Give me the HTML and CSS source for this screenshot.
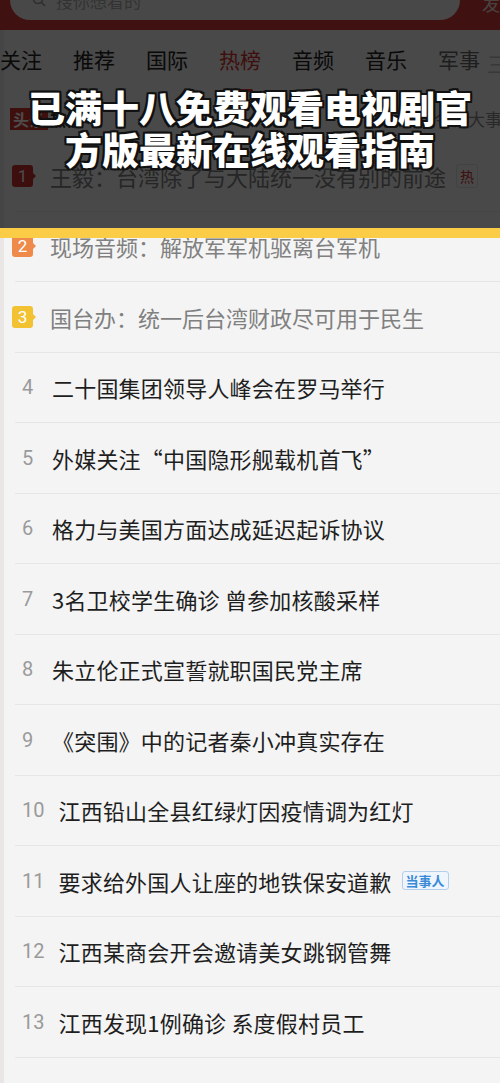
FILE: index.html
```html
<!DOCTYPE html>
<html lang="zh-CN">
<head>
    <meta charset="UTF-8">
    <meta name="viewport" content="width=device-width, initial-scale=1.0">
    <title>热榜</title>
    <link rel="stylesheet" href="styles.css">
</head>
<body>

    <div class="screen">
        <!-- Search header -->
        <div class="search-bar">
            <div class="search-box">
                <svg class="search-icon" width="14" height="14" viewBox="0 0 14 14"><circle cx="6" cy="6" r="4.5" fill="none" stroke="#999" stroke-width="1.6"/><line x1="9.4" y1="9.4" x2="13" y2="13" stroke="#999" stroke-width="1.6"/></svg>
                <span class="placeholder">搜你想看的</span>
            </div>
            <span class="publish">发</span>
        </div>

        <!-- Channel tabs -->
        <div class="tabs">
            <span class="tab">关注</span>
            <span class="tab">推荐</span>
            <span class="tab">国际</span>
            <span class="tab active">热榜</span>
            <span class="tab">音频</span>
            <span class="tab">音乐</span>
            <span class="tab fade">军事</span>
            <span class="tab-menu">三</span>
        </div>

        <!-- Hot list header -->
        <div class="hot-head">
            <span class="hot-logo">头条</span><span class="hot-logo-text">热榜</span>
            <span class="hot-more">今日大事</span>
        </div>

        <!-- Hot list -->
        <ul class="hot-list">
            <li class="row">
                <span class="badge"><svg width="24" height="22" viewBox="0 0 24 22"><path d="M3 0h15a3 3 0 0 1 3 3v5l3 3-3 3v5a3 3 0 0 1-3 3H3a3 3 0 0 1-3-3V3a3 3 0 0 1 3-3z" fill="#c8302c"/></svg><b>1</b></span>
                <span class="title muted">王毅：台湾除了与大陆统一没有别的前途</span>
                <span class="tag tag-hot">热</span>
            </li>
            <li class="row">
                <span class="badge"><svg width="24" height="22" viewBox="0 0 24 22"><path d="M3 0h15a3 3 0 0 1 3 3v5l3 3-3 3v5a3 3 0 0 1-3 3H3a3 3 0 0 1-3-3V3a3 3 0 0 1 3-3z" fill="#ee8a4a"/></svg><b>2</b></span>
                <span class="title muted">现场音频：解放军军机驱离台军机</span>
            </li>
            <li class="row">
                <span class="badge"><svg width="24" height="22" viewBox="0 0 24 22"><path d="M3 0h15a3 3 0 0 1 3 3v5l3 3-3 3v5a3 3 0 0 1-3 3H3a3 3 0 0 1-3-3V3a3 3 0 0 1 3-3z" fill="#f2c233"/></svg><b>3</b></span>
                <span class="title muted">国台办：统一后台湾财政尽可用于民生</span>
            </li>
            <li class="row"><span class="num">4</span><span class="title">二十国集团领导人峰会在罗马举行</span></li>
            <li class="row"><span class="num">5</span><span class="title">外媒关注“中国隐形舰载机首飞”</span></li>
            <li class="row"><span class="num">6</span><span class="title">格力与美国方面达成延迟起诉协议</span></li>
            <li class="row"><span class="num">7</span><span class="title">3名卫校学生确诊 曾参加核酸采样</span></li>
            <li class="row"><span class="num">8</span><span class="title">朱立伦正式宣誓就职国民党主席</span></li>
            <li class="row"><span class="num">9</span><span class="title">《突围》中的记者秦小冲真实存在</span></li>
            <li class="row"><span class="num">10</span><span class="title">江西铅山全县红绿灯因疫情调为红灯</span></li>
            <li class="row">
                <span class="num">11</span><span class="title">要求给外国人让座的地铁保安道歉</span>
                <span class="tag tag-blue">当事人</span>
            </li>
            <li class="row"><span class="num">12</span><span class="title">江西某商会开会邀请美女跳钢管舞</span></li>
            <li class="row"><span class="num">13</span><span class="title">江西发现1例确诊 系度假村员工</span></li>
        </ul>

        <!-- Cover overlay with headline -->
        <div class="cover">
            <h1 class="cover-title">已满十八免费观看电视剧官<br>方版最新在线观看指南</h1>
        </div>
        <div class="cover-bar"></div>
    </div>

</body>
</html>
```

FILE: styles.css
```css
/* Page */
body {
    margin: 0;
    padding: 0;
    background: #f4f4f4;
    font-family: "Noto Sans CJK SC", "Noto Sans", sans-serif;
    overflow: hidden;
}

.screen {
    position: relative;
    width: 500px;
    height: 1083px;
    overflow: hidden;
    background: linear-gradient(90deg, #ebe6e6 0, #ebe6e6 4px, #f4f4f4 4px);
}

/* Search header */
.search-bar {
    height: 30px;
    background: #d23a37;
    display: flex;
    align-items: flex-start;
    padding: 0 0 0 10px;
    box-sizing: border-box;
}

.search-box {
    width: 450px;
    height: 40px;
    margin-top: -20px;
    background: #f2f2f2;
    border-radius: 20px;
    display: flex;
    align-items: center;
    padding-left: 22px;
    box-sizing: border-box;
    gap: 10px;
}

.placeholder {
    color: #aaa;
    font-size: 17px;
}

.publish {
    color: #f7dede;
    font-size: 18px;
    margin-left: 22px;
    line-height: 1;
    margin-top: -6px;
}

/* Tabs */
.tabs {
    position: relative;
    height: 58px;
    display: flex;
    align-items: center;
    gap: 31px;
    white-space: nowrap;
}

.tab {
    font-size: 21px;
    color: #222;
    position: relative;
    line-height: 1;
}

.tab.active {
    color: #d2332f;
}

.tab.active::after {
    content: "";
    position: absolute;
    left: 8px;
    right: 8px;
    bottom: -22px;
    height: 3px;
    border-radius: 2px;
    background: #d2332f;
}

.tab.fade {
    color: #666;
}

.tab-menu {
    position: absolute;
    right: -8px;
    top: 18px;
    font-size: 21px;
    color: #bbb;
}

/* Hot list header */
.hot-head {
    height: 53px;
    display: flex;
    align-items: center;
    padding-left: 10px;
    padding-top: 8px;
    box-sizing: border-box;
}

.hot-logo {
    background: #d2332f;
    color: #fff;
    font-size: 16px;
    font-weight: bold;
    padding: 0 3px;
    line-height: 22px;
}

.hot-logo-text {
    font-size: 16px;
    font-weight: bold;
    color: #222;
    margin-left: 2px;
}

.hot-more {
    margin-left: auto;
    font-size: 17px;
    color: #888;
    white-space: nowrap;
    margin-right: -2px;
}

/* Hot list rows */
.hot-list {
    list-style: none;
    margin: 0;
    padding: 0;
}

.row {
    height: 70.5px;
    display: flex;
    align-items: center;
    margin-left: 15px;
    padding-left: 7px;
    border-bottom: 1px solid #e6e6e6;
    box-sizing: border-box;
    white-space: nowrap;
}

.num {
    font-family: "Roboto", "Liberation Sans", sans-serif;
    font-size: 20px;
    color: #9a9a9a;
    min-width: 16px;
    margin-right: 14px;
}

.badge {
    position: relative;
    width: 24px;
    height: 22px;
    margin-left: -10px;
    margin-right: 14px;
}

.badge svg {
    display: block;
}

.badge b {
    position: absolute;
    left: 0;
    top: 0;
    width: 21px;
    text-align: center;
    line-height: 22px;
    font-family: "Roboto", "Liberation Sans", sans-serif;
    font-weight: normal;
    font-size: 17px;
    color: #fff;
}

.title {
    font-size: 22px;
    color: #1e1e1e;
    letter-spacing: 0.2px;
}

.title.muted {
    color: #808080;
    letter-spacing: 0;
}

.tag {
    margin-left: 10px;
    font-size: 13px;
    line-height: 17px;
    padding: 0 3px;
    border-radius: 3px;
}

.tag-hot {
    color: #c33;
    border: 1px solid #ddd;
    line-height: 22px;
    font-size: 14px;
    padding: 0 3px;
}

.tag-blue {
    color: #3a8ad6;
    background: #eef5fc;
    border: 1px solid #b4cfe9;
    font-weight: bold;
}

/* Cover overlay */
.cover {
    position: absolute;
    left: 0;
    top: 0;
    width: 500px;
    height: 228px;
    background: rgba(0, 0, 0, 0.7);
}

.cover-title {
    margin: 86px 0 0 0;
    text-align: center;
    color: #fff;
    font-size: 37px;
    line-height: 42px;
    font-weight: 900;
    text-shadow:
        2px 0 0 #111, -2px 0 0 #111, 0 2px 0 #111, 0 -2px 0 #111,
        2px 2px 0 #111, -2px -2px 0 #111, 2px -2px 0 #111, -2px 2px 0 #111;
}

.cover-bar {
    position: absolute;
    left: 0;
    top: 228px;
    width: 500px;
    height: 10px;
    background: #fbcd46;
}
```
